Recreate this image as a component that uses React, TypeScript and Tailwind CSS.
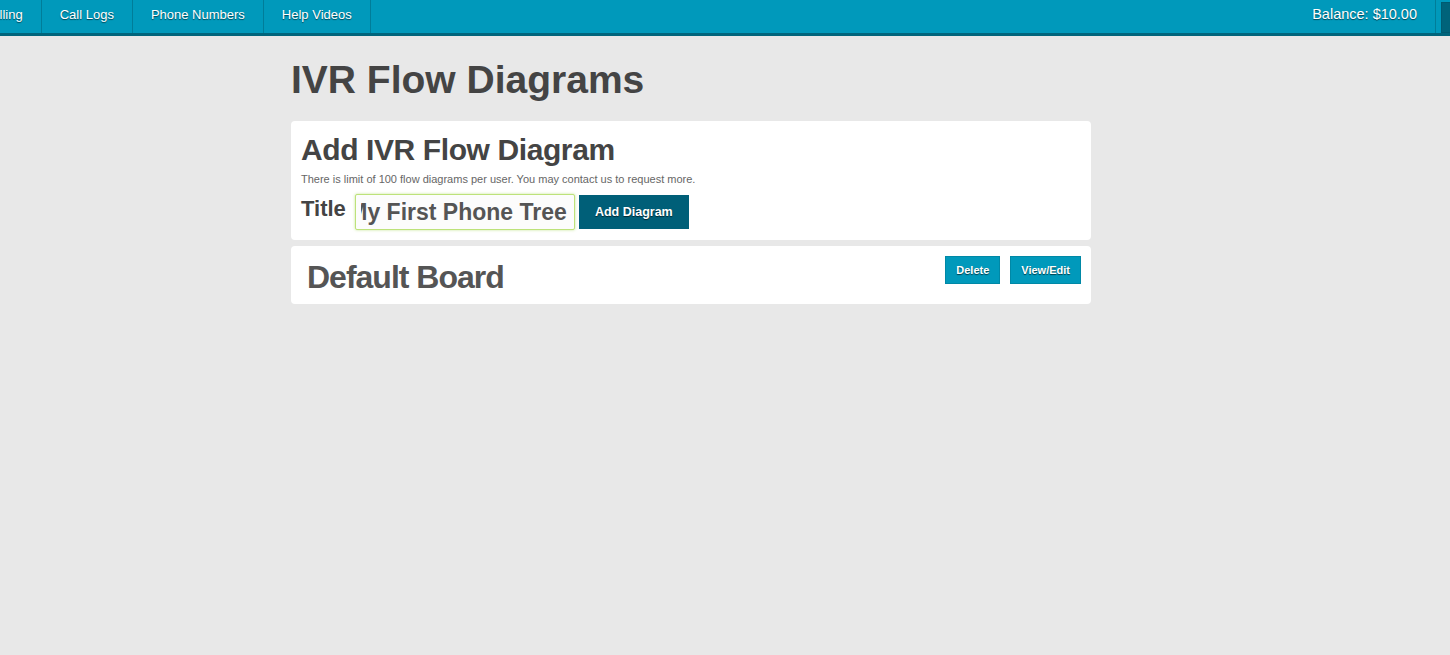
import React from "react";

const navItems = ["Billing", "Call Logs", "Phone Numbers", "Help Videos"];

const NavBar = () => (
  <div className="flex h-[36px] justify-between bg-[#0099bb] border-b-[3px] border-[#00657c] text-white [text-shadow:0_1px_1px_rgba(0,0,0,0.55)]">
    <ul className="flex ml-[-30px]">
      {navItems.map((label) => (
        <li
          key={label}
          className="h-[33px] px-[18px] pt-[7px] text-[13px] leading-[15px] border-r border-[#007d99] whitespace-nowrap"
        >
          {label}
        </li>
      ))}
    </ul>
    <div className="flex">
      <div className="h-[33px] px-[18px] pt-[6px] text-[14.5px] leading-[17px] border-r border-[#007d99] whitespace-nowrap">
        Balance: $10.00
      </div>
      <div className="ml-[5px] mt-[2px] h-[31px] w-[9px] bg-[#00637a] border-l border-y border-[#005a70]" />
    </div>
  </div>
);

// white panel
const Card = ({ className = "", children }: { className?: string; children: React.ReactNode }) => (
  <div className={`bg-white rounded-[4px] ${className}`}>{children}</div>
);

const SmallButton = ({ label }: { label: string }) => (
  <button className="h-[28px] px-[10px] bg-[#0099bb] border border-[#0088a6] text-white text-[11px] font-bold [text-shadow:0_1px_1px_rgba(0,0,0,0.6)]">
    {label}
  </button>
);

export default function App() {
  return (
    <div className="min-h-[655px] w-[1450px] overflow-hidden bg-[#e8e8e8] font-['Liberation_Sans',Arial,sans-serif]">
      <NavBar />

      <div className="ml-[291px] w-[800px]">
        <h1 className="mt-[24px] text-[39px] leading-[39px] font-bold text-[#444]">
          IVR Flow Diagrams
        </h1>

        {/* Add form */}
        <Card className="mt-[22px] px-[10px] pt-[14px] pb-[10px]">
          <h2 className="text-[30px] leading-[30px] font-bold text-[#444] tracking-[-0.4px]">
            Add IVR Flow Diagram
          </h2>
          <p className="mt-[9px] text-[11px] leading-[11px] text-[#666]">
            There is limit of 100 flow diagrams per user. You may contact us to request more.
          </p>
          <div className="mt-[9px] flex items-start">
            <label className="mt-[4px] text-[22px] leading-[22px] font-bold text-[#444]">Title</label>
            <div className="ml-[9px] flex h-[36px] w-[220px] items-center rounded-[2px] border border-[#bde27a] bg-[#fcfcfc] pl-[5px] pr-[7px] shadow-[0_0_3px_rgba(160,215,80,0.6)]">
              <div className="flex flex-1 justify-end overflow-hidden">
                <span className="whitespace-nowrap text-[23px] leading-[26px] font-bold text-[#555]">
                  My First Phone Tree
                </span>
              </div>
            </div>
            <button className="ml-[4px] mt-[1px] h-[34px] w-[110px] bg-[#005f78] text-white text-[12.5px] font-bold [text-shadow:0_1px_1px_rgba(0,0,0,0.6)]">
              Add Diagram
            </button>
          </div>
        </Card>

        {/* Board list */}
        <Card className="mt-[6px] flex items-start justify-between pl-[16px] pr-[10px] pt-[10px] pb-[11px]">
          <h3 className="mt-[5px] text-[32px] leading-[32px] font-bold text-[#555] tracking-[-1px]">
            Default Board
          </h3>
          <div className="flex gap-[10px]">
            <SmallButton label="Delete" />
            <SmallButton label="View/Edit" />
          </div>
        </Card>
      </div>
    </div>
  );
}
